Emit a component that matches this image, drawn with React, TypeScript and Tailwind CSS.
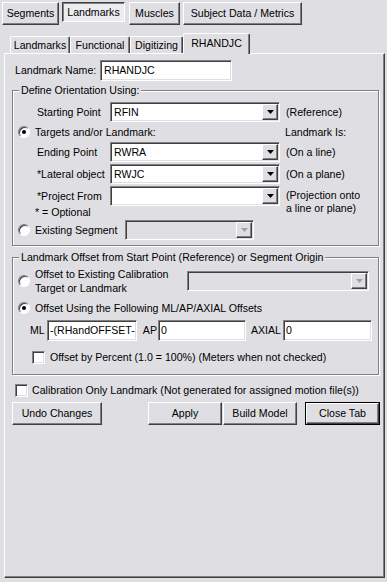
import type { ReactNode } from "react";

const sunken =
  "border border-t-[#808080] border-l-[#808080] border-b-white border-r-white shadow-[inset_1px_1px_0_#404040,inset_-1px_-1px_0_#dfdfe3]";
const raised =
  "border border-t-white border-l-white border-b-[#404040] border-r-[#404040] shadow-[inset_-1px_-1px_0_#808080]";

function Arrow({ disabled = false }: { disabled?: boolean }) {
  return (
    <svg width="7" height="4" viewBox="0 0 7 4">
      <polygon points="0,0 7,0 3.5,4" fill={disabled ? "#a0a0a0" : "#000"} />
    </svg>
  );
}

function Combo({ value = "", className, disabled = false }: { value?: string; className: string; disabled?: boolean }) {
  return (
    <div className={`${sunken} ${className} h-[20px] flex shrink-0 ${disabled ? "bg-[#dfdfe3]" : "bg-white"}`}>
      <span className="flex-1 pl-[3px] flex items-center whitespace-nowrap overflow-hidden">{value}</span>
      <span className={`${raised} w-[16px] m-[1px] flex items-center justify-center bg-[#dfdfe3]`}>
        <Arrow disabled={disabled} />
      </span>
    </div>
  );
}

function Field({ value, className }: { value: string; className: string }) {
  return (
    <div className={`${sunken} ${className} bg-white flex items-center pl-[2px] whitespace-nowrap overflow-hidden shrink-0`}>
      {value}
    </div>
  );
}

function Radio({ checked = false }: { checked?: boolean }) {
  return (
    <span className="w-[12px] h-[12px] shrink-0 rounded-full bg-white border border-t-[#808080] border-l-[#808080] border-r-white border-b-white shadow-[inset_1px_1px_0_#404040] flex items-center justify-center">
      {checked && <span className="w-[4px] h-[4px] rounded-full bg-black" />}
    </span>
  );
}

function Check() {
  return <span className={`${sunken} w-[13px] h-[13px] shrink-0 bg-white`} />;
}

function Button({ children, className }: { children: ReactNode; className: string }) {
  return <div className={`${raised} ${className} h-[23px] flex items-center justify-center shrink-0`}>{children}</div>;
}

function Group({ title, className, children }: { title: string; className: string; children: ReactNode }) {
  return (
    <div className={`relative ml-[7px] w-[367px] border border-[#808080] shadow-[inset_1px_1px_0_#fff,1px_1px_0_#fff] flex flex-col ${className}`}>
      <span className="absolute -top-[7px] left-[6px] px-[2px] bg-[#dfdfe3] whitespace-nowrap">{title}</span>
      {children}
    </div>
  );
}

function ComboRow({ label, value, note }: { label: string; value: string; note?: ReactNode }) {
  return (
    <div className="flex items-center h-[20px] pl-[24px]">
      <span className="w-[73px] shrink-0 whitespace-nowrap">{label}</span>
      <Combo value={value} className="w-[170px]" />
      {note}
    </div>
  );
}

export default function App() {
  return (
    <div className="w-[387px] h-[582px] overflow-hidden bg-[#dfdfe3] text-black text-[10.6px] leading-[13px] font-['Liberation_Sans',Arial,sans-serif] flex flex-col">
      {/* top tab buttons */}
      <div className="flex h-[22px] pt-[2px] pl-[2px]">
        <Button className="w-[57px] h-[20px]">Segments</Button>
        <div className="ml-[3px] w-[63px] h-[20px] flex items-center justify-center pt-[1px] bg-[#ececef] border border-t-[#404040] border-l-[#404040] border-b-white border-r-white shadow-[inset_1px_1px_0_#808080]">
          Landmarks
        </div>
        <Button className="ml-[4px] w-[51px] h-[20px]">Muscles</Button>
        <Button className="ml-[3px] w-[119px] h-[20px]">Subject Data / Metrics</Button>
      </div>

      {/* sub tabs */}
      <div className="relative z-10 flex items-end h-[20px] mt-[11px] pl-[10px]">
        {[
          ["Landmarks", "w-[60px]"],
          ["Functional", "w-[60px]"],
          ["Digitizing", "w-[53px]"],
        ].map(([t, w]) => (
          <div
            key={t}
            className={`${w} h-[17px] flex items-center justify-center border-l border-t border-r border-l-white border-t-white border-r-[#404040] shadow-[inset_-1px_0_0_#808080] rounded-t-[2px]`}
          >
            {t}
          </div>
        ))}
        <div className="w-[67px] h-[21px] -mb-[1px] flex items-center justify-center pb-[1px] bg-[#dfdfe3] border-l border-t border-r border-l-white border-t-white border-r-[#404040] shadow-[inset_-1px_0_0_#808080] rounded-t-[2px]">
          RHANDJC
        </div>
      </div>

      {/* tab panel */}
      <div className="ml-[4px] w-[381px] h-[525px] flex flex-col border border-l-white border-t-white border-r-[#404040] border-b-[#404040] shadow-[inset_-1px_-1px_0_#808080]">
        <div className="flex items-center h-[21px] mt-[6px] pl-[10px]">
          <span className="w-[85px] shrink-0">Landmark Name:</span>
          <Field value="RHANDJC" className="w-[132px] h-[21px] pl-[3px]" />
        </div>

        <Group title="Define Orientation Using:" className="mt-[9px] h-[156px]">
          <div className="mt-[11px]">
            <ComboRow label="Starting Point" value="RFIN" note={<span className="ml-[6px]">(Reference)</span>} />
          </div>
          <div className="mt-[3px] h-[14px] flex items-center pl-[5px]">
            <div className="w-[267px] flex items-center gap-[5px]">
              <Radio checked />
              <span>Targets and/or Landmark:</span>
            </div>
            <span>Landmark Is:</span>
          </div>
          <div className="mt-[3px]">
            <ComboRow label="Ending Point" value="RWRA" note={<span className="ml-[6px]">(On a line)</span>} />
          </div>
          <div className="mt-[2px]">
            <ComboRow label="*Lateral object" value="RWJC" note={<span className="ml-[6px]">(On a plane)</span>} />
          </div>
          <div className="mt-[2px]">
            <ComboRow
              label="*Project From"
              value=""
              note={
                <span className="ml-[6px] self-start mt-[3px] whitespace-nowrap">
                  (Projection onto
                  <br />
                  a line or plane)
                </span>
              }
            />
          </div>
          <div className="h-[13px] pl-[22px]">* = Optional</div>
          <div className="mt-[1px] h-[20px] flex items-center pl-[5px]">
            <Radio />
            <span className="ml-[5px] w-[90px] whitespace-nowrap">Existing Segment</span>
            <Combo disabled className="w-[129px]" />
          </div>
        </Group>

        <Group title="Landmark Offset from Start Point (Reference) or Segment Origin" className="mt-[11px] h-[118px]">
          <div className="mt-[9px] h-[28px] flex items-center pl-[5px]">
            <Radio />
            <span className="ml-[5px] w-[152px] leading-[14px] whitespace-nowrap">
              Offset to Existing Calibration
              <br />
              Target or Landmark
            </span>
            <Combo disabled className="w-[182px]" />
          </div>
          <div className="mt-[6px] h-[14px] flex items-center gap-[5px] pl-[5px]">
            <Radio checked />
            <span>Offset Using the Following ML/AP/AXIAL Offsets</span>
          </div>
          <div className="mt-[5px] h-[20px] flex items-center pl-[17px]">
            <span className="w-[17px] shrink-0">ML</span>
            <Field value="-(RHandOFFSET-" className="w-[90px] h-[21px]" />
            <span className="w-[21px] shrink-0 text-right pr-[1px]">AP</span>
            <Field value="0" className="w-[88px] h-[21px]" />
            <span className="w-[37px] shrink-0 text-right pr-[2px]">AXIAL</span>
            <Field value="0" className="w-[89px] h-[21px]" />
          </div>
          <div className="mt-[11px] h-[13px] flex items-center gap-[5px] pl-[19px]">
            <Check />
            <span className="whitespace-nowrap">Offset by Percent (1.0 = 100%) (Meters when not checked)</span>
          </div>
        </Group>

        <div className="mt-[9px] h-[13px] flex items-center gap-[4px] pl-[10px]">
          <Check />
          <span className="whitespace-nowrap">Calibration Only Landmark (Not generated for assigned motion file(s))</span>
        </div>

        <div className="mt-[5px] flex pl-[7px]">
          <Button className="w-[90px]">Undo Changes</Button>
          <Button className="ml-[46px] w-[74px]">Apply</Button>
          <Button className="ml-[1px] w-[74px]">Build Model</Button>
          <div className="ml-[8px] w-[75px] h-[23px] border border-black flex">
            <div className={`${raised} flex-1 flex items-center justify-center`}>Close Tab</div>
          </div>
        </div>
      </div>
    </div>
  );
}
